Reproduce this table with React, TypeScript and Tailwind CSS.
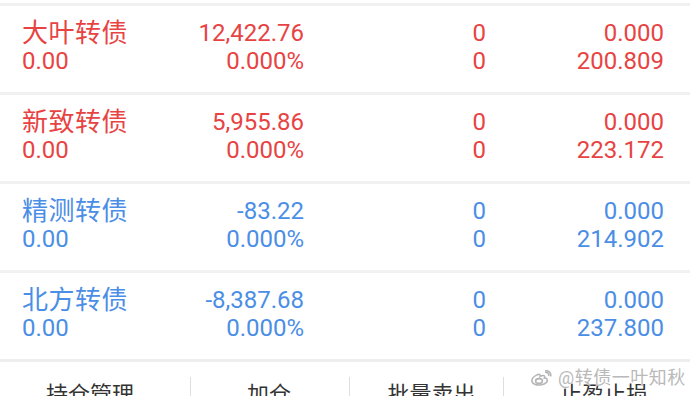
import React from "react";

type Bond = {
  name: string;
  price: string;
  cost: string;
  pct: string;
  up: boolean;
  qty: string;
  avail: string;
  last: string;
  value: string;
};

const bonds: Bond[] = [
  { name: "大叶转债", price: "12,422.76", cost: "0.00", pct: "0.000%", up: true, qty: "0", avail: "0", last: "0.000", value: "200.809" },
  { name: "新致转债", price: "5,955.86", cost: "0.00", pct: "0.000%", up: true, qty: "0", avail: "0", last: "0.000", value: "223.172" },
  { name: "精测转债", price: "-83.22", cost: "0.00", pct: "0.000%", up: false, qty: "0", avail: "0", last: "0.000", value: "214.902" },
  { name: "北方转债", price: "-8,387.68", cost: "0.00", pct: "0.000%", up: false, qty: "0", avail: "0", last: "0.000", value: "237.800" },
];

const font = { fontFamily: 'Roboto, "Noto Sans CJK SC", sans-serif' };

function Row({ bond }: { bond: Bond }) {
  const color = bond.up ? "text-[#e84343]" : "text-[#4b8ee6]";
  return (
    <div className={`grid h-[86px] grid-cols-[138px_144px_182px_178px] bg-white pl-[22px] pt-[13px] ${color}`}>
      <div className="flex flex-col">
        <span className="h-[28px] text-[26px] leading-[28px] tracking-[0.5px]">{bond.name}</span>
        <span className="h-[28px] text-[24px] leading-[28px]">{bond.cost}</span>
      </div>
      <div className="flex flex-col items-end">
        <span className="h-[28px] text-[24px] leading-[28px]">{bond.price}</span>
        <span className="h-[28px] text-[24px] leading-[28px]">{bond.pct}</span>
      </div>
      <div className="flex flex-col items-end">
        <span className="h-[28px] text-[24px] leading-[28px]">{bond.qty}</span>
        <span className="h-[28px] text-[24px] leading-[28px]">{bond.avail}</span>
      </div>
      <div className="flex flex-col items-end">
        <span className="h-[28px] text-[24px] leading-[28px]">{bond.last}</span>
        <span className="h-[28px] text-[24px] leading-[28px]">{bond.value}</span>
      </div>
    </div>
  );
}

function WeiboLogo() {
  return (
    <svg width="22" height="16" viewBox="0 0 22 16" fill="none" stroke="#b5b5b5" strokeWidth="1.6">
      <path d="M8 4.5C4 6 1.5 9 2 11.5c.6 2.8 5 4 9.5 3.2 4-.7 6.5-3 5.7-5.2-.4-1.2-1.8-1.6-2.8-1.4.6-1.6.2-2.8-1.6-2.6-1 .1-2 .6-2.7 1 .3-1.6-.3-2.6-2.1-2z" />
      <ellipse cx="9" cy="11" rx="3.4" ry="2.4" />
      <path d="M15 2.2c2.2-.4 4.3 1.5 3.8 3.8" />
      <path d="M15.2 0.8c3.3-.6 6.2 2.3 5.5 5.6" />
    </svg>
  );
}

export default function App() {
  const tabs = [
    { label: "持仓管理", w: "w-[190px]", pad: "pr-[10px]" },
    { label: "加仓", w: "w-[159px]", pad: "pr-[2px]" },
    { label: "批量卖出", w: "w-[154px]", pad: "pl-[10px]" },
    { label: "止盈止损", w: "w-[187px]", pad: "pl-[14px]" },
  ];
  return (
    <div className="relative h-[396px] w-[690px] overflow-hidden bg-white" style={font}>
      <div className="h-[3px] bg-white" />
      <div className="h-[3px] bg-[#f1f1f1]" />
      {bonds.map((b, i) => (
        <div key={b.name}>
          <Row bond={b} />
          <div className={i === bonds.length - 1 ? "h-[3px] bg-[#eeeeee]" : "h-[3px] bg-[#f1f1f1]"} />
        </div>
      ))}
      <div className="flex h-[35px] bg-white">
        {tabs.map((t, i) => (
          <div key={t.label} className={`flex ${t.w}`}>
            {i > 0 && <div className="mt-[15px] w-px bg-[#dedede]" />}
            <div className={`flex-1 pt-[20px] text-center text-[22px] leading-[26px] text-[#333333] ${t.pad}`}>
              {t.label}
            </div>
          </div>
        ))}
      </div>
      <div className="absolute left-[530px] top-[368px] flex items-center gap-[6px]">
        <WeiboLogo />
        <span
          className="text-[18px] leading-[20px] tracking-[0.5px] text-[#b9b9b9]"
          style={{ textShadow: "0 0 1px #fff, 0 0 1px #fff" }}
        >
          @转债一叶知秋
        </span>
      </div>
    </div>
  );
}
